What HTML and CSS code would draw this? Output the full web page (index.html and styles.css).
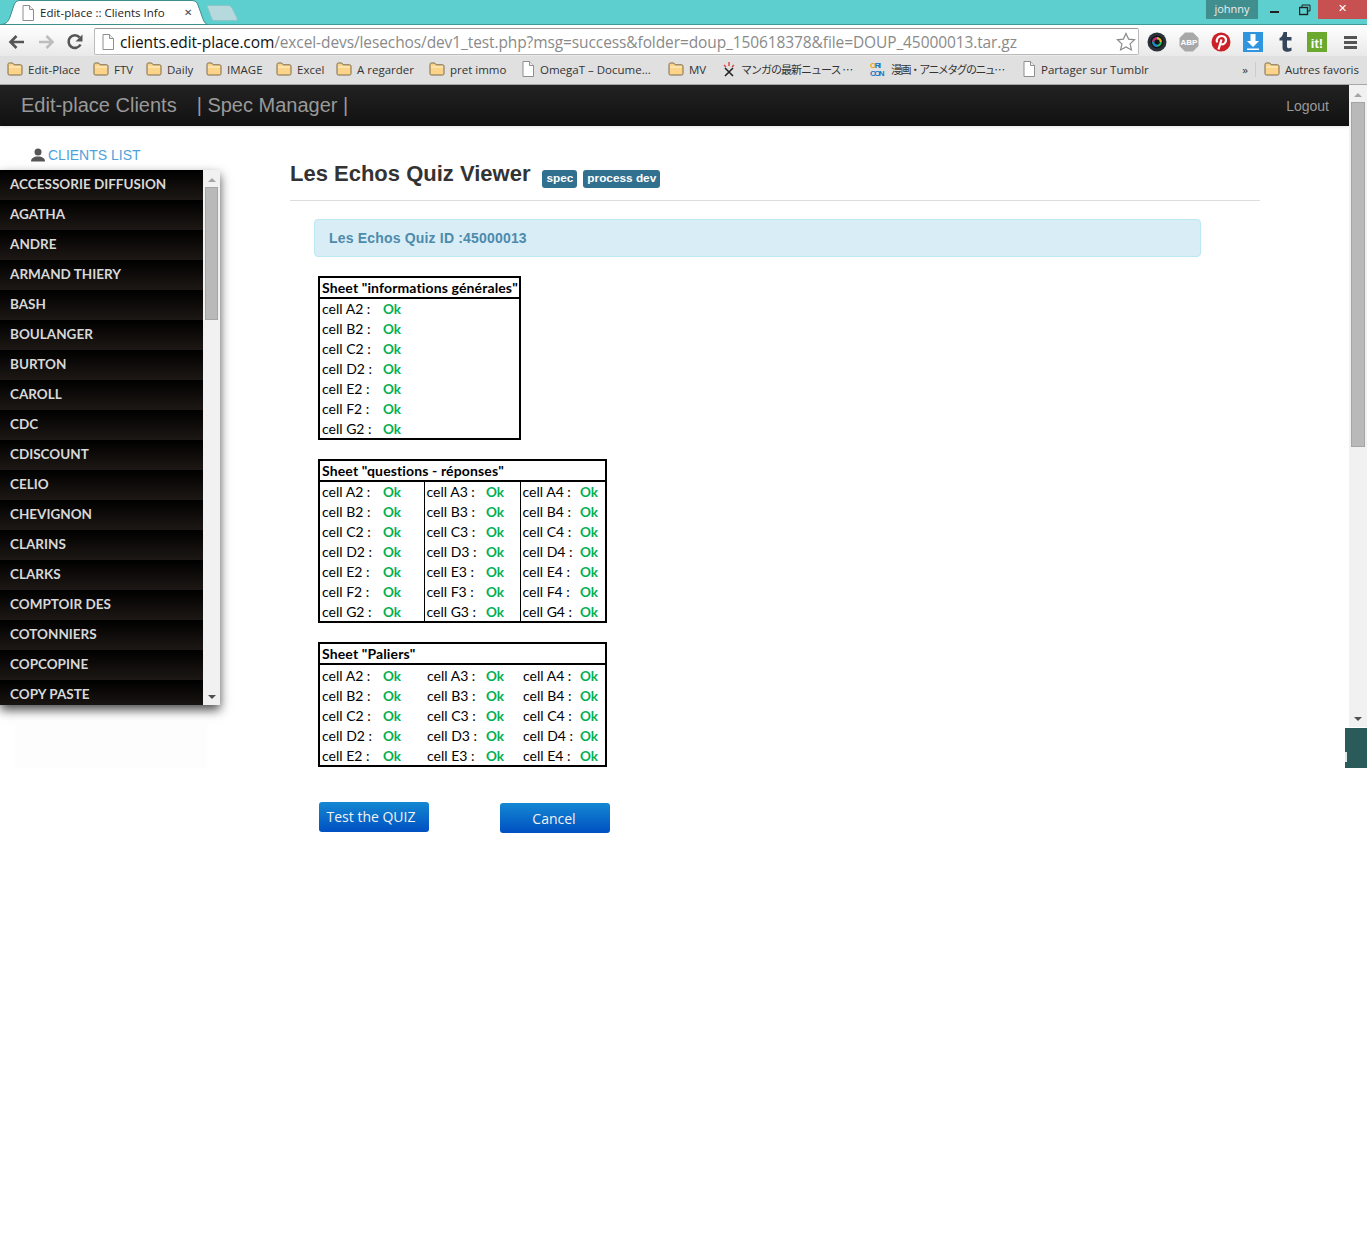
FILE: index.html
```html
<!DOCTYPE html>
<html lang="fr">
<head>
    <meta charset="UTF-8">
    <title>Edit-place :: Clients Info</title>
    <link rel="stylesheet" href="styles.css">
</head>
<body>
    <svg class="sprites" width="0" height="0">
        <symbol id="i-folder" viewBox="0 0 16 14">
            <path d="M1 2.500C1 1.700 1.500 1 2.300 1h3.400l1.500 1.800h6.500c.8 0 1.300.6 1.300 1.300v7.600c0 .8-.5 1.300-1.300 1.300H2.300c-.8 0-1.300-.5-1.300-1.300z" fill="#fbd48a" stroke="#7d6a4a"/>
            <path d="M2 5h12" stroke="#fff2d0"/>
        </symbol>
        <symbol id="i-page" viewBox="0 0 14 16">
            <path d="M2 .5h6.500l4 4v11H2z" fill="#fff" stroke="#8e8e8e"/>
            <path d="M8.500 .5v4h4" fill="#eee" stroke="#8e8e8e"/>
        </symbol>
    </svg>

    <div class="tabstrip">
        <div class="tab">
            <svg class="tab-bg" width="208" height="25" viewBox="0 0 208 25"><path d="M0 24.500C6 24.500 8 22 10 17L14 5C15 2 17 .5 20 .5H192C195 .5 197 2 198 5L203 19C204 22 206 24.500 208 24.500Z" fill="#fff" stroke="#3d8f8f"/></svg>
            <svg class="tab-icon" width="14" height="16"><use href="#i-page"/></svg>
            <span class="tab-title">Edit-place :: Clients Info</span>
            <span class="tab-close">&#10005;</span>
        </div>
        <svg class="new-tab" width="32" height="16" viewBox="0 0 32 16"><path d="M1 .5H21C23 .5 24 1.500 25 3L30 13C31 15 30 15.500 28 15.500H8C6 15.500 5.500 15 5 14L.5 2C0 1 0 .5 1 .5Z" fill="#b6d9de" stroke="#8fc4c8"/></svg>
        <div class="user-badge">johnny</div>
        <div class="win-btn"><svg width="12" height="12"><rect x="1" y="7" width="9" height="2" fill="#222"/></svg></div>
        <div class="win-btn"><svg width="12" height="12" fill="none" stroke="#222"><rect x=".5" y="3.500" width="8" height="7" stroke-width="1.400"/><path d="M3 3V1h8v6H9"/></svg></div>
        <div class="win-close">&#10005;</div>
    </div>

    <div class="toolbar">
        <div class="nav-icons">
            <svg width="18" height="16" viewBox="0 0 18 16" fill="none" stroke="#555" stroke-width="2.600"><path d="M16 8H3M8.500 2L2.500 8l6 6"/></svg>
            <svg width="18" height="16" viewBox="0 0 18 16" fill="none" stroke="#bdbdbd" stroke-width="2.600"><path d="M2 8h13M9.500 2l6 6-6 6"/></svg>
            <svg width="18" height="18" viewBox="0 0 18 18"><path d="M14.500 11.500A6.300 6.300 0 1 1 13.600 4.400" fill="none" stroke="#555" stroke-width="2.600"/><path d="M16.500 1.500V8.500H9.500Z" fill="#555"/></svg>
        </div>
        <div class="address-bar">
            <svg width="14" height="16"><use href="#i-page"/></svg>
            <span class="url"><span class="url-host">clients.edit-place.com</span>/excel-devs/lesechos/dev1_test.php?msg=success&amp;folder=doup_150618378&amp;file=DOUP_45000013.tar.gz</span>
            <svg class="star" width="20" height="20" viewBox="0 0 20 20"><path d="M10 1.500l2.600 5.600 6 .7-4.500 4.100 1.300 6L10 14.900l-5.400 3 1.300-6L1.400 7.800l6-.7z" fill="#fff" stroke="#8a8a8a" stroke-width="1.200"/></svg>
        </div>
        <div class="extensions">
            <svg width="20" height="20" viewBox="0 0 20 20"><circle cx="10" cy="10" r="9.500" fill="#2c3038"/><circle cx="10" cy="10" r="6.500" fill="#14161a"/><circle cx="10" cy="10" r="3.800" fill="none" stroke="#25c060" stroke-width="2"/><path d="M10 6.200A3.800 3.800 0 0 1 13.800 10" fill="none" stroke="#e8b020" stroke-width="2"/><path d="M6.200 10A3.800 3.800 0 0 1 10 6.200" fill="none" stroke="#d02080" stroke-width="2"/><path d="M6.200 10A3.800 3.800 0 0 0 10 13.800" fill="none" stroke="#2080e0" stroke-width="2"/></svg>
            <svg width="20" height="20" viewBox="0 0 20 20"><path d="M6 .5h8L19.500 6v8L14 19.500H6L.5 14V6z" fill="#a8a8a8"/><text x="10" y="13" class="ext-abp">ABP</text></svg>
            <svg width="20" height="20" viewBox="0 0 20 20"><circle cx="10" cy="10" r="9.500" fill="#cb2027"/><path d="M7.500 17.500L10.500 7.500M6 10.500C4.800 7 7.500 4 10.500 4c3.200 0 5 2.200 4.400 5-.6 2.700-3 4-5 3" fill="none" stroke="#fff" stroke-width="2.200"/></svg>
            <svg width="20" height="20" viewBox="0 0 20 20"><rect width="20" height="20" fill="#2f95de"/><path d="M7.500 2h5v7h3.500L10 15 4 9h3.500z" fill="#fff"/><rect x="4" y="16.500" width="12" height="1.500" fill="#fff"/></svg>
            <svg width="20" height="20" viewBox="0 0 20 20"><path d="M8.500 0h3.500v5h4.500v3.500H12v6c0 2 2.200 2.300 4.500 1v3.200c-3.700 2.200-9 1.300-9-3.200V8.500H4.500V6c2.300-.8 3.500-3 4-6z" fill="#35465c"/></svg>
            <svg width="20" height="20" viewBox="0 0 20 20"><rect width="20" height="20" fill="#6aa92e"/><text x="10" y="15.500" class="ext-it">it!</text></svg>
            <svg class="ext-menu" width="18" height="16" viewBox="0 0 18 16" fill="#555"><rect x="2" y="2" width="13" height="3"/><rect x="2" y="7" width="13" height="3"/><rect x="2" y="12" width="13" height="3"/></svg>
        </div>
    </div>

    <div class="bookmarks">
        <div class="bm-list">
            <a class="bm"><svg width="16" height="14"><use href="#i-folder"/></svg>Edit-Place</a>
            <a class="bm"><svg width="16" height="14"><use href="#i-folder"/></svg>FTV</a>
            <a class="bm"><svg width="16" height="14"><use href="#i-folder"/></svg>Daily</a>
            <a class="bm"><svg width="16" height="14"><use href="#i-folder"/></svg>IMAGE</a>
            <a class="bm"><svg width="16" height="14"><use href="#i-folder"/></svg>Excel</a>
            <a class="bm"><svg width="16" height="14"><use href="#i-folder"/></svg>A regarder</a>
            <a class="bm"><svg width="16" height="14"><use href="#i-folder"/></svg>pret immo</a>
            <a class="bm"><svg width="14" height="16"><use href="#i-page"/></svg>OmegaT – Docume...</a>
            <a class="bm"><svg width="16" height="14"><use href="#i-folder"/></svg>MV</a>
            <a class="bm bm-jp"><svg width="14" height="16" viewBox="0 0 14 16"><path d="M3 7l8 8M11 7l-8 8" stroke="#222" stroke-width="1.600"/><path d="M2 4l2 2M7 1v4M12 4l-2 2" stroke="#d8433a" stroke-width="1.400"/></svg>マンガの最新ニュース ⋯</a>
            <a class="bm bm-jp bm-jp-tight"><svg width="16" height="16" viewBox="0 0 16 16"><text x="0" y="7" class="ext-ori"><tspan class="ext-ori-o">O</tspan>RI</text><text x="0" y="15" class="ext-ori">CON</text></svg>漫画・アニメタグのニュ⋯</a>
            <a class="bm"><svg width="14" height="16"><use href="#i-page"/></svg>Partager sur Tumblr</a>
        </div>
        <span class="bm-more">»</span>
        <a class="bm bm-other"><svg width="16" height="14"><use href="#i-folder"/></svg>Autres favoris</a>
    </div>

    <div class="page">
        <nav class="navbar">
            <a class="brand">Edit-place Clients</a>
            <a class="brand-sub">| Spec Manager |</a>
            <a class="logout">Logout</a>
        </nav>

        <div class="content">
            <aside class="sidebar">
                <div class="clients-title">
                    <svg width="14" height="14" viewBox="0 0 14 14" fill="#555"><circle cx="7" cy="4" r="3.500"/><path d="M0 13.500c0-3.500 3-4.500 5-5h4c2 .5 5 1.500 5 5z"/></svg>
                    CLIENTS LIST
                </div>
                <div class="clients-box">
                    <ul class="clients-list">
                        <li>ACCESSORIE DIFFUSION</li>
                        <li>AGATHA</li>
                        <li>ANDRE</li>
                        <li>ARMAND THIERY</li>
                        <li>BASH</li>
                        <li>BOULANGER</li>
                        <li>BURTON</li>
                        <li>CAROLL</li>
                        <li>CDC</li>
                        <li>CDISCOUNT</li>
                        <li>CELIO</li>
                        <li>CHEVIGNON</li>
                        <li>CLARINS</li>
                        <li>CLARKS</li>
                        <li>COMPTOIR DES</li>
                        <li>COTONNIERS</li>
                        <li>COPCOPINE</li>
                        <li>COPY PASTE</li>
                    </ul>
                    <div class="list-scroll">
                        <span class="arrow-up"></span>
                        <span class="list-thumb"></span>
                        <span class="arrow-down"></span>
                    </div>
                </div>
                <div class="sidebar-ghost"></div>
            </aside>

            <main class="main">
                <div class="page-header">
                    <h3>Les Echos Quiz Viewer</h3>
                    <span class="label">spec</span>
                    <span class="label">process dev</span>
                </div>
                <div class="alert">Les Echos Quiz ID :45000013</div>

                <div class="sheets">
                    <table class="sheet sheet-one">
                        <colgroup><col class="col-a"><col></colgroup>
                        <tr><th colspan="2">Sheet "informations générales"</th></tr>
                        <tr class="first-row"><td class="cell-a">cell A2 :</td><td class="ok">Ok</td></tr>
                        <tr><td class="cell-a">cell B2 :</td><td class="ok">Ok</td></tr>
                        <tr><td class="cell-a">cell C2 :</td><td class="ok">Ok</td></tr>
                        <tr><td class="cell-a">cell D2 :</td><td class="ok">Ok</td></tr>
                        <tr><td class="cell-a">cell E2 :</td><td class="ok">Ok</td></tr>
                        <tr><td class="cell-a">cell F2 :</td><td class="ok">Ok</td></tr>
                        <tr><td class="cell-a">cell G2 :</td><td class="ok">Ok</td></tr>
                    </table>

                    <table class="sheet sheet-three lined">
                        <colgroup><col class="col-a"><col class="col-a-ok"><col class="col-b"><col class="col-b-ok"><col class="col-c"><col></colgroup>
                        <tr><th colspan="6">Sheet "questions - réponses"</th></tr>
                        <tr class="first-row"><td class="cell-a">cell A2 :</td><td class="ok">Ok</td><td class="cell-b">cell A3 :</td><td class="ok">Ok</td><td class="cell-c">cell A4 :</td><td class="ok">Ok</td></tr>
                        <tr><td class="cell-a">cell B2 :</td><td class="ok">Ok</td><td class="cell-b">cell B3 :</td><td class="ok">Ok</td><td class="cell-c">cell B4 :</td><td class="ok">Ok</td></tr>
                        <tr><td class="cell-a">cell C2 :</td><td class="ok">Ok</td><td class="cell-b">cell C3 :</td><td class="ok">Ok</td><td class="cell-c">cell C4 :</td><td class="ok">Ok</td></tr>
                        <tr><td class="cell-a">cell D2 :</td><td class="ok">Ok</td><td class="cell-b">cell D3 :</td><td class="ok">Ok</td><td class="cell-c">cell D4 :</td><td class="ok">Ok</td></tr>
                        <tr><td class="cell-a">cell E2 :</td><td class="ok">Ok</td><td class="cell-b">cell E3 :</td><td class="ok">Ok</td><td class="cell-c">cell E4 :</td><td class="ok">Ok</td></tr>
                        <tr><td class="cell-a">cell F2 :</td><td class="ok">Ok</td><td class="cell-b">cell F3 :</td><td class="ok">Ok</td><td class="cell-c">cell F4 :</td><td class="ok">Ok</td></tr>
                        <tr><td class="cell-a">cell G2 :</td><td class="ok">Ok</td><td class="cell-b">cell G3 :</td><td class="ok">Ok</td><td class="cell-c">cell G4 :</td><td class="ok">Ok</td></tr>
                    </table>

                    <table class="sheet sheet-three paliers">
                        <colgroup><col class="col-a"><col class="col-a-ok"><col class="col-b"><col class="col-b-ok"><col class="col-c"><col></colgroup>
                        <tr><th colspan="6">Sheet "Paliers"</th></tr>
                        <tr class="first-row"><td class="cell-a">cell A2 :</td><td class="ok">Ok</td><td class="cell-b">cell A3 :</td><td class="ok">Ok</td><td class="cell-c">cell A4 :</td><td class="ok">Ok</td></tr>
                        <tr><td class="cell-a">cell B2 :</td><td class="ok">Ok</td><td class="cell-b">cell B3 :</td><td class="ok">Ok</td><td class="cell-c">cell B4 :</td><td class="ok">Ok</td></tr>
                        <tr><td class="cell-a">cell C2 :</td><td class="ok">Ok</td><td class="cell-b">cell C3 :</td><td class="ok">Ok</td><td class="cell-c">cell C4 :</td><td class="ok">Ok</td></tr>
                        <tr><td class="cell-a">cell D2 :</td><td class="ok">Ok</td><td class="cell-b">cell D3 :</td><td class="ok">Ok</td><td class="cell-c">cell D4 :</td><td class="ok">Ok</td></tr>
                        <tr><td class="cell-a">cell E2 :</td><td class="ok">Ok</td><td class="cell-b">cell E3 :</td><td class="ok">Ok</td><td class="cell-c">cell E4 :</td><td class="ok">Ok</td></tr>
                    </table>
                </div>

                <div class="actions">
                    <button class="btn btn-test">Test the QUIZ</button>
                    <button class="btn btn-cancel">Cancel</button>
                </div>
            </main>
        </div>

        <div class="page-scroll">
            <span class="arrow-up"></span>
            <span class="page-thumb"></span>
            <span class="arrow-down"></span>
        </div>
        <div class="corner-widget"></div>
    </div>
</body>
</html>
```

FILE: styles.css
```css
* {
    margin: 0;
    padding: 0;
    box-sizing: border-box;
}

html, body {
    height: 100%;
    overflow: hidden;
}

body {
    font-family: "Liberation Sans", Arial, sans-serif;
    background-color: #fff;
    color: #333;
}

.sprites {
    position: absolute;
}

/* browser frame */
.tabstrip {
    display: flex;
    height: 25px;
    background-color: #5ccfce;
    border-bottom: 1px solid #3e9a9a;
    align-items: flex-start;
}

.tab {
    position: relative;
    flex: none;
    width: 208px;
    height: 25px;
    display: flex;
    align-items: center;
    padding-left: 21px;
    font-family: "Open Sans", sans-serif;
    font-size: 11.500px;
    color: #222;
}

.tab-bg {
    position: absolute;
    left: 0;
    top: 0;
}

.tab-icon, .tab-title, .tab-close {
    position: relative;
}

.tab-title {
    margin-left: 5px;
    width: 144px;
    white-space: nowrap;
}

.tab-close {
    font-size: 10px;
    color: #444;
    font-weight: bold;
    font-family: "DejaVu Sans", sans-serif;
}

.new-tab {
    flex: none;
    margin: 5px 0 0 -1px;
}

.user-badge {
    margin-left: auto;
    width: 52px;
    height: 19px;
    background-color: #418e8e;
    color: #eee;
    font-family: "Open Sans", sans-serif;
    font-size: 11px;
    line-height: 18px;
    text-align: center;
}

.win-btn {
    width: 30px;
    height: 19px;
    display: flex;
    align-items: center;
    justify-content: center;
}

.win-btn svg {
    margin-left: 3px;
}

.win-close {
    width: 49px;
    height: 19px;
    background-color: #c75050;
    color: #fff;
    font-family: "DejaVu Sans", sans-serif;
    font-size: 11px;
    font-weight: bold;
    line-height: 18px;
    text-align: center;
}

.toolbar {
    display: flex;
    align-items: center;
    height: 31px;
    padding-top: 2px;
    background: linear-gradient(#ffffff, #e9e9e9);
}

.nav-icons {
    display: flex;
    align-items: center;
    gap: 11px;
    width: 94px;
    padding-left: 8px;
}

.address-bar {
    flex: none;
    width: 1045px;
    height: 27px;
    display: flex;
    align-items: center;
    gap: 5px;
    padding: 0 2px 0 6px;
    background-color: #fff;
    border: 1px solid #bbb;
    border-top-color: #999;
    border-radius: 2px;
}

.url {
    font-family: "Open Sans", sans-serif;
    font-size: 15.500px;
    letter-spacing: -0.1px;
    color: #8a8a8a;
    white-space: nowrap;
    flex: 1;
    overflow: hidden;
}

.url-host {
    color: #111;
}

.extensions {
    display: flex;
    align-items: center;
    gap: 12px;
    margin-left: 8px;
}

.ext-menu {
    margin-left: 3px;
}

.ext-abp {
    font: bold 8px "Liberation Sans", sans-serif;
    fill: #fff;
    text-anchor: middle;
}

.ext-it {
    font: bold 13px "Liberation Sans", sans-serif;
    fill: #fff;
    text-anchor: middle;
}

.ext-ori {
    font: bold 8px "Liberation Sans", sans-serif;
    fill: #1a74c0;
}

.ext-ori-o {
    fill: #e8a020;
}

.bookmarks {
    display: flex;
    align-items: center;
    height: 29px;
    padding: 0 8px 2px 7px;
    background-color: #e0e0e0;
    border-bottom: 1px solid #a8a8a8;
    font-family: "Open Sans", "Noto Sans CJK JP", sans-serif;
    font-size: 11.500px;
    color: #333;
}

.bm-list {
    display: grid;
    grid-template-columns: 86px 53px 60px 70px 60px 93px 92px 147px 54px 148px 152px auto;
}

.bm {
    display: flex;
    align-items: center;
    gap: 5px;
    white-space: nowrap;
}

.bm svg {
    flex: none;
}

.bm-jp {
    font-size: 11px;
    letter-spacing: -1px;
}

.bm-jp-tight {
    letter-spacing: -1.6px;
}

.bm-more {
    margin-left: auto;
    margin-right: 7px;
}

.bm-other {
    padding-left: 8px;
    border-left: 1px solid #ccc;
}

/* page */
.page {
    position: relative;
    height: 1166px;
}

.navbar {
    display: flex;
    align-items: center;
    height: 41px;
    width: 1349px;
    padding: 0 20px 0 21px;
    background: linear-gradient(#222222, #111111);
    color: #999;
    box-shadow: 0 1px 3px rgba(0, 0, 0, 0.1);
}

.brand, .brand-sub {
    font-size: 20px;
}

.brand-sub {
    margin-left: 20px;
}

.logout {
    margin-left: auto;
    font-size: 14px;
}

.content {
    display: flex;
    align-items: flex-start;
}

/* client list */
.sidebar {
    flex: none;
    width: 220px;
    padding-top: 21px;
}

.clients-title {
    display: flex;
    align-items: center;
    gap: 3px;
    height: 16px;
    padding-left: 31px;
    font-size: 14px;
    color: #4da2dc;
}

.clients-box {
    display: flex;
    height: 535px;
    margin-top: 7px;
    overflow: hidden;
    box-shadow: 0 5px 10px rgba(0, 0, 0, 0.7);
}

.clients-list {
    list-style: none;
    width: 203px;
    height: 535px;
    overflow: hidden;
    flex: none;
}

.clients-list li {
    height: 30px;
    padding-left: 10px;
    font-family: Lato, sans-serif;
    font-size: 13.500px;
    font-weight: bold;
    line-height: 28px;
    white-space: nowrap;
    color: #d8d8d8;
    background: linear-gradient(#000000, #1d1815);
}

.list-scroll {
    flex: 1;
    display: flex;
    flex-direction: column;
    align-items: center;
    background-color: #f1f1f1;
}

.list-thumb {
    width: 13px;
    height: 133px;
    margin-top: 5px;
    background-color: #b9b9b9;
    border: 1px solid #a5a5a5;
}

.arrow-up, .arrow-down {
    flex: none;
    width: 0;
    height: 0;
    border-left: 4px solid transparent;
    border-right: 4px solid transparent;
}

.arrow-up {
    margin-top: 8px;
    border-bottom: 4px solid #a5a5a5;
}

.arrow-down {
    margin-top: auto;
    margin-bottom: 6px;
    border-top: 4px solid #505050;
}

.sidebar-ghost {
    width: 192px;
    height: 48px;
    margin: 15px 0 0 15px;
    background-color: #fdfdfd;
}

/* main column */
.main {
    flex: none;
    width: 970px;
    margin-left: 70px;
    padding-top: 32px;
}

.page-header {
    display: flex;
    align-items: center;
    height: 43px;
    padding-bottom: 10px;
    border-bottom: 1px solid #ddd;
}

.page-header h3 {
    font-size: 22px;
    line-height: 32px;
    font-weight: bold;
    color: #333;
    margin-right: 12px;
}

.label {
    height: 18px;
    margin-top: 9px;
    margin-right: 6px;
    padding: 0 4px;
    background-color: #31708f;
    border-radius: 3px;
    color: #fff;
    font-size: 11.800px;
    font-weight: bold;
    line-height: 17px;
}

.alert {
    width: 887px;
    height: 38px;
    margin: 18px 0 0 24px;
    padding-left: 14px;
    background-color: #d9edf7;
    border: 1px solid #bce8f1;
    border-radius: 4px;
    color: #4d8bab;
    font-size: 14px;
    font-weight: bold;
    letter-spacing: 0.18px;
    line-height: 36px;
}

/* quiz result tables */
.sheets {
    display: flex;
    flex-direction: column;
    align-items: flex-start;
    gap: 19px;
    margin: 19px 0 0 28px;
}

.sheet {
    border-collapse: collapse;
    table-layout: fixed;
    border: 2px solid #000;
    font-family: Lato, sans-serif;
    font-size: 14px;
    color: #000;
}

.sheet-one {
    width: 203px;
}

.sheet-three {
    width: 289px;
}

.col-a {
    width: 64px;
}

.col-a-ok {
    width: 41px;
}

.col-b {
    width: 62px;
}

.col-b-ok {
    width: 34px;
}

.col-c {
    width: 60px;
}

.sheet th {
    height: 21px;
    padding-left: 2px;
    border-bottom: 2px solid #000;
    text-align: left;
    font-weight: bold;
    letter-spacing: 0.13px;
    white-space: nowrap;
}

.sheet td {
    height: 20px;
    padding-top: 1px;
    vertical-align: baseline;
    white-space: nowrap;
}

/* the header border eats into the first row */
.sheet .first-row td {
    height: 21px;
}

.sheet.paliers .first-row td {
    height: 22px;
    padding-top: 2px;
}

.cell-a {
    padding-left: 2px;
}

.cell-b, .cell-c {
    padding-left: 3px;
}

.ok {
    color: #00b050;
    font-size: 13.500px;
    font-weight: bold;
}

.lined .cell-b, .lined .cell-c {
    padding-left: 2px;
    border-left: 1px solid #000;
}

.actions {
    display: flex;
    align-items: flex-start;
    margin: 35px 0 0 29px;
}

.btn {
    width: 110px;
    height: 30px;
    border: none;
    border-radius: 3px;
    background: linear-gradient(#1488d2, #0050c2);
    color: #f2f2f2;
    font-family: "Open Sans", sans-serif;
    font-size: 14px;
}

.btn-test {
    padding: 0 6px 2px 0;
}

.btn-cancel {
    margin: 1px 0 0 71px;
    padding-right: 2px;
}

/* window scrollbar, it stops short of the page bottom */
.page-scroll {
    position: absolute;
    top: 0;
    right: 0;
    width: 18px;
    height: 642px;
    display: flex;
    flex-direction: column;
    align-items: center;
    background-color: #f1f1f1;
}

.page-thumb {
    flex: none;
    width: 14px;
    height: 345px;
    margin-top: 5px;
    background-color: #b9b9b9;
    border: 1px solid #a5a5a5;
}

.corner-widget {
    position: absolute;
    top: 643px;
    right: 0;
    width: 22px;
    height: 40px;
    background-color: #2a5a5a;
}

.corner-widget::before {
    content: "";
    position: absolute;
    left: 0;
    top: 24px;
    width: 2px;
    height: 10px;
    background-color: #dfe8e8;
}
```
